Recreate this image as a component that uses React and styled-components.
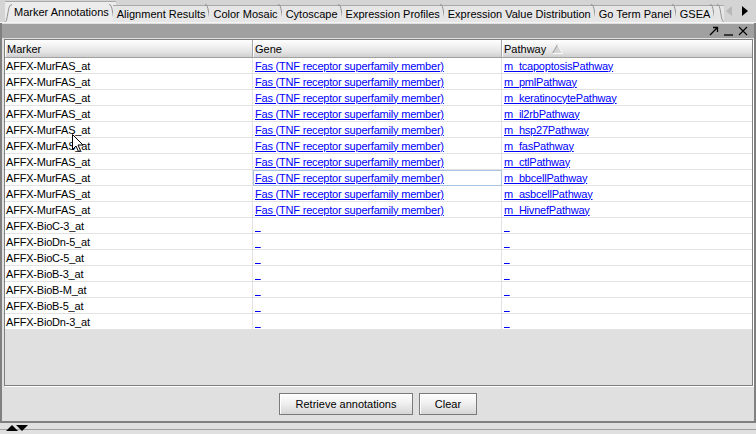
import React from "react";
import styled, { createGlobalStyle } from "styled-components";

const GlobalStyle = createGlobalStyle`
  html, body { margin: 0; padding: 0; background: #e0e0e0; }
  body { font-family: "Liberation Sans", Arial, sans-serif; font-size: 11px; }
`;

const tabs = [
  "Marker Annotations",
  "Alignment Results",
  "Color Mosaic",
  "Cytoscape",
  "Expression Profiles",
  "Expression Value Distribution",
  "Go Term Panel",
  "GSEA",
];

const pathways = [
  "m_tcapoptosisPathway",
  "m_pmlPathway",
  "m_keratinocytePathway",
  "m_il2rbPathway",
  "m_hsp27Pathway",
  "m_fasPathway",
  "m_ctlPathway",
  "m_bbcellPathway",
  "m_asbcellPathway",
  "m_HivnefPathway",
];

const others = [
  "AFFX-BioC-3_at",
  "AFFX-BioDn-5_at",
  "AFFX-BioC-5_at",
  "AFFX-BioB-3_at",
  "AFFX-BioB-M_at",
  "AFFX-BioB-5_at",
  "AFFX-BioDn-3_at",
];

const rows = [
  ...pathways.map((p) => ({
    marker: "AFFX-MurFAS_at",
    gene: "Fas (TNF receptor superfamily member)",
    pathway: p,
  })),
  ...others.map((m) => ({ marker: m, gene: null, pathway: null })),
];

function TabEdge({ left }) {
  return (
    <Edge width="7" height="18" viewBox="0 0 7 18">
      {left ? (
        <path d="M0.5 18 C2.5 16 3 4 5 1.5 L7 0.5" fill="none" stroke="#909090" />
      ) : (
        <path d="M0 0.5 L1.5 1 C4 4 3.5 15 6.5 18" fill="none" stroke="#909090" />
      )}
    </Edge>
  );
}

function App() {
  return (
    <>
      <GlobalStyle />
      <Screen>
        <TabStrip>
          {tabs.map((t, i) => (
            <Tab key={t} $active={i === 0}>
              {i === 0 && <TabEdge left />}
              <TabLabel $active={i === 0}>{t}</TabLabel>
              <TabEdge />
            </Tab>
          ))}
          <Tab $stub>
            <TabEdge />
          </Tab>
          <ScrollArrows>
            <svg width="8" height="10" viewBox="0 0 8 10">
              <path d="M7 0 L1 5 L7 10 Z" fill="#b8b8b8" />
            </svg>
            <svg width="8" height="10" viewBox="0 0 8 10">
              <path d="M1 0 L7 5 L1 10 Z" fill="#000" />
            </svg>
          </ScrollArrows>
        </TabStrip>

        <Panel>
          <TitleBar>
            <svg width="10" height="10" viewBox="0 0 10 10">
              <path d="M1 9 L8.5 1.5 M4 1.5 H8.5 V6" fill="none" stroke="#000" strokeWidth="1.3" />
            </svg>
            <svg width="11" height="10" viewBox="0 0 11 10">
              <path d="M1 9 H10" stroke="#000" strokeWidth="1.3" />
            </svg>
            <svg width="10" height="10" viewBox="0 0 10 10">
              <path d="M1 1 L9 9 M9 1 L1 9" stroke="#000" strokeWidth="1.1" />
            </svg>
          </TitleBar>

          <TableBox>
            <HeaderRow>
              <HeaderCell>Marker</HeaderCell>
              <HeaderCell>Gene</HeaderCell>
              <HeaderCell>
                Pathway
                <SortIcon width="11" height="10" viewBox="0 0 11 10">
                  <path d="M5.5 0.5 L10.5 9.5 H0.5 Z" fill="#d4d4d4" />
                  <path d="M0.5 9.5 L5.5 0.5" fill="none" stroke="#9a9a9a" />
                  <path d="M5.5 0.5 L10.5 9.5 H0.5" fill="none" stroke="#fafafa" />
                </SortIcon>
              </HeaderCell>
            </HeaderRow>
            {rows.map((r, i) => (
              <Row key={i}>
                <Cell>{r.marker}</Cell>
                <Cell $selected={i === 7}>
                  <Link>{r.gene || "\u00a0\u00a0"}</Link>
                </Cell>
                <Cell>
                  <Link>{r.pathway || "\u00a0\u00a0"}</Link>
                </Cell>
              </Row>
            ))}
            <Cursor width="12" height="19" viewBox="0 0 12 19">
              <path
                d="M0.5 0.5 V15.5 L4 12 L6.5 17.5 L8.5 16.5 L6 11 H11 Z"
                fill="#fff"
                stroke="#000"
              />
            </Cursor>
          </TableBox>

          <ButtonRow>
            <Button>Retrieve annotations</Button>
            <Button $narrow>Clear</Button>
          </ButtonRow>
        </Panel>

        <BottomStrip>
          <svg width="24" height="7" viewBox="0 0 24 7">
            <path d="M1 7 L7 1 L13 7 Z" fill="#000" />
            <path d="M11 1 H23 L17 7 Z" fill="#000" />
          </svg>
        </BottomStrip>
      </Screen>
    </>
  );
}

export default App;

const Screen = styled.div`
  width: 756px;
  height: 434px;
  display: flex;
  flex-direction: column;
  background: #e0e0e0;
  color: #000;
  overflow: hidden;
  position: relative;
`;

const TabStrip = styled.div`
  height: 23px;
  display: flex;
  align-items: flex-end;
  padding-left: 5px;
  background: #d4d4d4;
  border-bottom: 1px solid #f4f4f4;
  box-sizing: border-box;
`;

const Tab = styled.div`
  display: flex;
  align-items: stretch;
  height: ${(p) => (p.$active ? "21px" : "17px")};
  margin-left: ${(p) => (p.$active ? "0" : "-3px")};
  background: ${(p) => (p.$active ? "#ececec" : "#e6e6e6")};
  border-top: 1px solid #a8a8a8;
  box-sizing: border-box;
  width: ${(p) => (p.$stub ? "10px" : "auto")};
  justify-content: flex-end;
`;

const Edge = styled.svg`
  flex: none;
  align-self: flex-end;
  margin-top: -1px;
`;

const TabLabel = styled.span`
  display: flex;
  align-items: center;
  padding: ${(p) => (p.$active ? "0 0 0 2px" : "0 0 0 4px")};
  white-space: nowrap;
`;

const ScrollArrows = styled.div`
  margin-left: auto;
  align-self: center;
  display: flex;
  gap: 8px;
  padding-right: 7px;
`;

const Panel = styled.div`
  flex: 1;
  display: flex;
  flex-direction: column;
  border-left: 2px solid #808080;
  border-right: 2px solid #808080;
  border-bottom: 2px solid #808080;
`;

const TitleBar = styled.div`
  height: 14px;
  margin-top: 1px;
  background: #a0a0a0;
  display: flex;
  align-items: center;
  justify-content: flex-end;
  gap: 4px;
  padding-right: 6px;
`;

const TableBox = styled.div`
  position: relative;
  margin: 1px 1px 0 2px;
  height: 345px;
  background: #e0e0e0;
  border: 1px solid #808080;
  box-shadow: 1px 1px 0 #fff;
  overflow: hidden;
`;

const HeaderRow = styled.div`
  display: grid;
  grid-template-columns: 248px 249px 1fr;
  height: 18px;
  background: linear-gradient(#ffffff, #e4e4e4 70%, #cfcfcf);
  border-bottom: 1px solid #a0a0a0;
  box-sizing: border-box;
`;

const HeaderCell = styled.div`
  display: flex;
  align-items: center;
  padding-left: 2px;
  border-right: 1px solid #a8a8a8;
  box-shadow: inset 1px 0 0 #fff;
  &:last-child { border-right: none; }
`;

const SortIcon = styled.svg`
  margin-left: 6px;
`;

const Row = styled.div`
  display: grid;
  grid-template-columns: 248px 249px 1fr;
  height: 16px;
  background: #fff;
  letter-spacing: -0.2px;
`;

const Cell = styled.div`
  display: flex;
  align-items: center;
  padding-left: 1px;
  border-right: 1px solid #e2e2e2;
  border-bottom: 1px solid #e2e2e2;
  box-sizing: border-box;
  white-space: nowrap;
  outline: ${(p) => (p.$selected ? "1px solid #a9c4e2" : "none")};
  outline-offset: -1px;
  &:last-child { border-right: none; }
`;

const Link = styled.span`
  color: #0000ff;
  text-decoration: underline;
  padding-left: 1px;
`;

const Cursor = styled.svg`
  position: absolute;
  left: 67px;
  top: 94px;
`;

const ButtonRow = styled.div`
  flex: 1;
  display: flex;
  justify-content: center;
  align-items: center;
  gap: 6px;
  padding-top: 1px;
`;

const Button = styled.button`
  height: 22px;
  width: ${(p) => (p.$narrow ? "58px" : "134px")};
  font-family: "Liberation Sans", Arial, sans-serif;
  font-size: 11px;
  color: #000;
  background: linear-gradient(#ffffff, #f0f0f0 45%, #d6d6d6);
  border: 1px solid #7a7a7a;
  box-shadow: inset 1px 1px 0 #fff;
  padding: 0;
`;

const BottomStrip = styled.div`
  height: 11px;
  flex: none;
  display: flex;
  align-items: flex-start;
  padding: 1px 0 0 5px;
  box-sizing: border-box;
  background: linear-gradient(
    to bottom,
    transparent 6px,
    #a0a0a0 6px,
    #a0a0a0 7px,
    transparent 7px
  );
`;
